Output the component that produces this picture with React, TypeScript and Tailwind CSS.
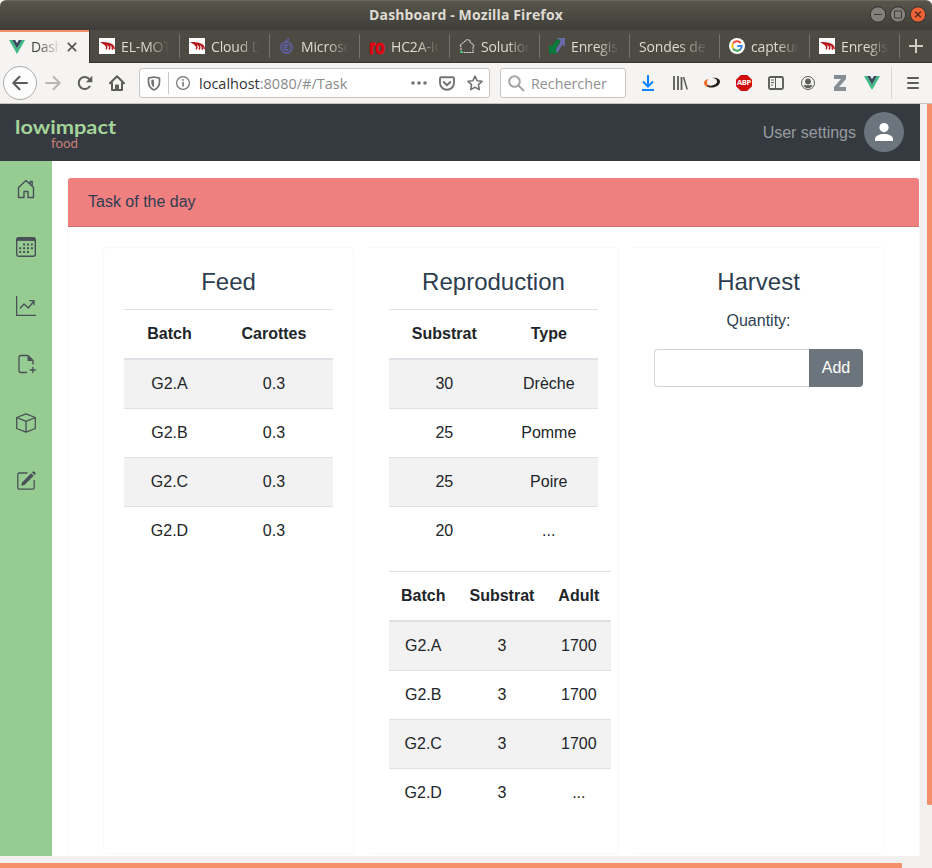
import React from 'react';

const CHROME = "font-['Open_Sans','Noto_Sans',sans-serif]";

function VueIcon() {
  return (
    <svg width="16" height="14" viewBox="0 0 16 14" className="shrink-0">
      <path d="M0 0h3.2L8 8.400 12.800 0H16L8 14z" fill="#41b883" />
      <path d="M3.200 0h3L8 3.200 9.800 0h3L8 8.400z" fill="#34495e" />
    </svg>
  );
}

function RsIcon() {
  return (
    <svg width="16" height="16" viewBox="0 0 16 16" className="shrink-0">
      <path d="M0 0h16v16H0z" fill="#fff" />
      <path d="M1 4C6 4 12 4.500 14.500 7.200 15.500 8.500 16 10 16 11.500L15 11C14.500 9 13 7.800 11.500 7.500L6 7.300C4.500 6.300 3 5.200 1 4z" fill="#b8161c" />
      <path d="M6 6.800C8 7.800 8.500 9.500 7 11.300M9 6.800C11 7.800 11.300 9.800 10 11.500M12 7C13.800 8.300 14 9.800 13.200 11.700" fill="none" stroke="#b8161c" strokeWidth="1.500" />
    </svg>
  );
}

function BerryIcon() {
  return (
    <svg width="16" height="16" viewBox="0 0 16 16" fill="none" stroke="#6464b8" className="shrink-0">
      <circle cx="7.500" cy="9.500" r="5.700" strokeWidth="1.200" />
      <circle cx="7.500" cy="9.500" r="3.600" strokeWidth=".7" />
      <path d="M6 7.500v4h3M6 7.500h3M6 9.500h2.500" strokeWidth="1" />
      <path d="M7 4C6.800 2.300 8 .8 9.800.5M7.500 3.500C9 3.500 9.800 2.200 9.800.5" strokeWidth="1" />
    </svg>
  );
}

function RoIcon() {
  return (
    <span className="flex h-4 w-4 shrink-0 items-center justify-center font-['Liberation_Sans',sans-serif] text-[18px] leading-4 font-bold text-[#e3000f]">
      <span className="inline-block translate-y-px scale-x-[.85] scale-y-110 [-webkit-text-stroke:.8px_#e3000f]">ro</span>
    </span>
  );
}

function OutlineHouseIcon() {
  return (
    <svg width="16" height="16" viewBox="0 0 16 16" fill="none" className="shrink-0">
      <path d="M2 14.500V8.500L.8 7.500 7.500 2 9 1.500 11 2.500v1.500l4 3.500-1 1v6z" stroke="#d4d4d0" strokeWidth="1.100" strokeDasharray="2 .6" />
      <path d="M1.200 14h2.300" stroke="#37c871" strokeWidth="1.800" />
    </svg>
  );
}

function ArrowsIcon() {
  return (
    <svg width="16" height="16" viewBox="0 0 16 16" className="shrink-0">
      <path d="M8 0h8v9l-2.500-2.500L8.500 15H5L11.500 4z" fill="#6a6aa8" />
      <path d="M0 6.500l2.500 2L8 1.500h3.500L6.500 12 9 15.500H0z" fill="#087a3c" />
    </svg>
  );
}

function GoogleIcon() {
  return (
    <svg width="16" height="16" viewBox="0 0 16 16" fill="none" strokeWidth="2" className="shrink-0">
      <circle cx="8" cy="8" r="8" fill="#fff" />
      <path d="M11.600 5A4.700 4.700 0 0 0 4 5.600" stroke="#ea4335" />
      <path d="M4 5.600a4.700 4.700 0 0 0 0 4.800" stroke="#fbbc05" />
      <path d="M4 10.400a4.700 4.700 0 0 0 7.200 1" stroke="#34a853" />
      <path d="M11.200 11.400A4.600 4.600 0 0 0 12.700 8H8.200" stroke="#4285f4" />
    </svg>
  );
}

const tabs: { label: string; icon: React.ReactNode }[] = [
  { label: 'EL-MOT', icon: <RsIcon /> },
  { label: 'Cloud D', icon: <RsIcon /> },
  { label: 'Microsof', icon: <BerryIcon /> },
  { label: 'HC2A-IC', icon: <RoIcon /> },
  { label: 'Solution', icon: <OutlineHouseIcon /> },
  { label: 'Enregist', icon: <ArrowsIcon /> },
  { label: 'Sondes de', icon: null },
  { label: 'capteur', icon: <GoogleIcon /> },
  { label: 'Enregist', icon: <RsIcon /> },
];

function TitleBar() {
  return (
    <div className="relative flex h-[30px] items-center justify-center rounded-t-[6px] border-t border-[#6b685c] bg-linear-to-b from-[#58564b] to-[#3e3d39]">
      <span className="pb-[2px] text-[14px] leading-none font-bold tracking-[0.13px] whitespace-nowrap text-[#dfdbd2]">Dashboard - Mozilla Firefox</span>
      <div className="absolute top-[5px] right-[6px] flex gap-1">
        <svg width="16" height="17" viewBox="0 0 16 17"><circle cx="8" cy="8.500" r="7.700" fill="#83817a" stroke="#33322e" /><path d="M4 8.500h8" stroke="#3c3b37" /></svg>
        <svg width="16" height="17" viewBox="0 0 16 17"><circle cx="8" cy="8.500" r="7.700" fill="#83817a" stroke="#33322e" /><path d="M4.500 5h7v7h-7z" fill="none" stroke="#3c3b37" /></svg>
        <svg width="16" height="17" viewBox="0 0 16 17"><circle cx="8" cy="8.500" r="7.700" fill="#ed6237" stroke="#33322e" /><path d="M5.200 5.700l5.600 5.600M10.800 5.700l-5.600 5.600" stroke="#4a2a1d" strokeWidth="1.300" /></svg>
      </div>
    </div>
  );
}

function TabStrip() {
  return (
    <div className="flex h-[33px] bg-[#4c4a43] text-[14px]">
      <div className="flex w-[89px] shrink-0 items-center border-t-2 border-[#f28d68] bg-[#f5f4f2] pb-[2px] pl-[9px]">
        <VueIcon />
        <span className="ml-[6px] w-[30px] overflow-hidden tracking-[-0.4px] text-[#3c3c3c] [mask-image:linear-gradient(90deg,#000_20%,transparent)]">Dash</span>
        <svg width="10" height="10" viewBox="0 0 10 10" className="ml-[6px]"><path d="M.8.8l8.400 8.400M9.200.8L.8 9.200" stroke="#555" strokeWidth="1.700" /></svg>
      </div>
      {tabs.map((tab, i) => (
        <div key={i} className={'flex shrink-0 items-center border-b border-[#34332f] ' + (i === 0 ? 'w-[91px] border-l' : 'w-[90px]')}>
          <div className="flex w-[89px] items-center gap-[6px] pl-[9px]">
            {tab.icon}
            <span className={(tab.icon ? 'w-[48px]' : 'w-[70px]') + ' overflow-hidden whitespace-nowrap tracking-[-0.15px] text-[#dfdbd2] [mask-image:linear-gradient(90deg,#000_55%,transparent)]'}>{tab.label}</span>
          </div>
          <div className="h-6 w-px shrink-0 bg-[#74726b]" />
        </div>
      ))}
      <div className="flex flex-1 items-center justify-center border-b border-[#34332f]">
        <svg width="14" height="14" viewBox="0 0 14 14"><path d="M7 0v14M0 7h14" stroke="#cfccc4" strokeWidth="2" /></svg>
      </div>
    </div>
  );
}

function Cell({ children }: { children: React.ReactNode }) {
  return <div className="flex w-8 shrink-0 items-center justify-center">{children}</div>;
}

const line = { fill: 'none', stroke: '#5c5c5b', strokeWidth: 2, strokeLinecap: 'round', strokeLinejoin: 'round' } as const;

function Toolbar() {
  return (
    <div className="flex h-[41px] items-center border-b border-[#c6c4c1] bg-[#f5f4f2]">
      <div className="ml-[3px] flex h-[34px] w-[34px] shrink-0 items-center justify-center rounded-full border border-[#adacaa] bg-[#fcfcfc]">
        <svg width="16" height="16" viewBox="0 0 16 16" {...line}><path d="M15 8H1.500M7.500 1.800L1.300 8l6.200 6.200" /></svg>
      </div>
      <Cell><svg width="16" height="16" viewBox="0 0 16 16" {...line} stroke="#b9b8b6"><path d="M1 8h13.500M8.500 1.800L14.700 8l-6.200 6.200" /></svg></Cell>
      <Cell>
        <svg width="16" height="16" viewBox="0 0 16 16">
          <path d="M12.600 11.500A6 6 0 1 1 12.600 4.500" fill="none" stroke="#5c5c5b" strokeWidth="2" strokeLinecap="round" />
          <path d="M15.300.8v6.500H8.800z" fill="#5c5c5b" />
        </svg>
      </Cell>
      <Cell>
        <svg width="16" height="16" viewBox="0 0 16 16" {...line}><path d="M1 8.300L8 1.200l7 7.100M3 8v7h10V8M7 15v-4.500h2V15" /></svg>
      </Cell>
      <div className="ml-[6px] flex h-[30px] w-[351px] shrink-0 items-center rounded-[3px] border border-[#c8c7c5] bg-white">
        <div className="flex w-7 justify-center">
          <svg width="14" height="15" viewBox="0 0 14 15"><path d="M1.500 2.200L7 1l5.500 1.200V6c0 4-2.200 6.500-5.500 8-3.300-1.500-5.500-4-5.500-8z" fill="none" stroke="#737373" strokeWidth="1.700" strokeLinejoin="round" /><path d="M7 3.400V11.500C5 10.200 4.300 8.500 4.300 6V4z" fill="#737373" /></svg>
        </div>
        <div className="h-[22px] w-px bg-[#c8c8c8]" />
        <svg width="14" height="14" viewBox="0 0 14 14" className="ml-[7px]"><circle cx="7" cy="7" r="6.400" fill="none" stroke="#737373" strokeWidth="1.200" /><path d="M7 6v4.500M7 3.200v1.500" stroke="#737373" strokeWidth="1.600" /></svg>
        <span className="ml-[9px] w-[214px] pt-[2px] text-[14.500px] whitespace-nowrap text-[#8b8b8b]"><span className="text-[#333]">localhost</span>:8080/#/Task</span>
        <svg width="16" height="4" viewBox="0 0 16 4" fill="#737373" className="-ml-[2px] shrink-0"><circle cx="2" cy="2" r="1.800" /><circle cx="8" cy="2" r="1.800" /><circle cx="14" cy="2" r="1.800" /></svg>
        <svg width="16" height="15" viewBox="0 0 16 15" {...line} stroke="#737373" className="ml-[12px] shrink-0"><path d="M2.200 1.200h11.600q1.200 0 1.200 1.200V6.800a7 7 0 0 1-14 0V2.400q0-1.200 1.200-1.200z" strokeWidth="1.900" /><path d="M4.700 6L8 9.200 11.300 6" /></svg>
        <svg width="16" height="16" viewBox="0 0 16 16" {...line} stroke="#737373" strokeWidth="1.600" className="ml-[12px] shrink-0"><path d="M8 1.200l2.100 4.500 4.900.6-3.600 3.400.9 4.900L8 12.200l-4.300 2.400.9-4.900L1 6.300l4.900-.6z" /></svg>
      </div>
      <div className="ml-[10px] flex h-[30px] w-[126px] shrink-0 items-center rounded-[3px] border border-[#c8c7c5] bg-white pl-[7px]">
        <svg width="17" height="17" viewBox="0 0 17 17" fill="none" stroke="#a5a5a5" strokeWidth="2"><circle cx="6.500" cy="6.500" r="5.300" /><path d="M10.500 10.500l5.500 5.500" /></svg>
        <span className="ml-[6px] pt-[2px] text-[14.300px] text-[#8f8f8f]">Rechercher</span>
      </div>
      <div className="ml-[6px] flex">
        <Cell><svg width="14" height="16" viewBox="0 0 14 16" fill="none" stroke="#0a84ff" strokeWidth="2"><path d="M7 0v11M2 6.500l5 5 5-5M1 15h12" /></svg></Cell>
        <Cell><svg width="16" height="14" viewBox="0 0 16 14" fill="none" stroke="#5c5c5b" strokeWidth="2"><path d="M2 0v14M6 0v14M9.500 1v13" strokeWidth="1.800" /><path d="M11.500 1l3.700 12.500" strokeWidth="1.500" /></svg></Cell>
        <Cell>
          <svg width="16" height="12" viewBox="0 0 16 12">
            <path d="M8 .8C11.500.3 16 1.200 16 4.500 16 8.500 11 11 5.500 10.500L3 9.500C8 9.800 13 7.500 13 4.500 13 2.500 11 1.400 8 .8z" fill="#202020" />
            <path d="M4.500 1.800C2 2.500 0 4 0 6 0 8 1.500 9.500 4 10.200L6 9C4 8.500 3 7.300 3 5.600 3 4 3.500 2.800 4.500 1.800z" fill="#eb6b2d" />
            <path d="M3 9C5 10.500 9 10.500 12 8.500L11 7.500C8.500 8.800 5.500 9 4 8z" fill="#302722" />
          </svg>
        </Cell>
        <Cell>
          <div className="flex h-4 w-4 items-center justify-center bg-[#d00c0c] text-[7.500px] leading-none font-bold tracking-[-0.3px] text-white [clip-path:polygon(30%_0,70%_0,100%_30%,100%_70%,70%_100%,30%_100%,0_70%,0_30%)]">ABP</div>
        </Cell>
        <Cell><svg width="16" height="14" viewBox="0 0 16 14" fill="none" stroke="#5c5c5b"><rect x="1" y="1" width="14" height="12" rx="1.500" strokeWidth="1.900" /><path d="M7.500 1v12M3 4h3M3 6.500h3M3 9h2" /></svg></Cell>
        <Cell><svg width="14" height="14" viewBox="0 0 14 14"><circle cx="7" cy="7" r="6.500" fill="none" stroke="#5c5c5b" /><circle cx="7" cy="5.500" r="2.900" fill="#5c5c5b" /><path d="M2.500 9.300C4 8.500 5 9.300 7 9.300s3-.8 4.500 0C10.600 11.200 9 12.200 7 12.200s-3.600-1-4.500-2.900z" fill="#5c5c5b" /></svg></Cell>
        <Cell><svg width="12" height="16" viewBox="0 0 12 16"><path d="M0 0h12v4L5 12h7v4H0v-4l7-8H0z" fill="#858d95" /></svg></Cell>
        <Cell><VueIcon /></Cell>
      </div>
      <div className="ml-[3px] h-8 w-px bg-[#d8d6d4]" />
      <svg width="12" height="12" viewBox="0 0 12 12" className="ml-[15px]" stroke="#5c5c5b" strokeWidth="2" strokeLinecap="round"><path d="M1 1h10M1 6h10M1 11h10" /></svg>
    </div>
  );
}

const navIcons: React.ReactNode[] = [
  <g><path d="M2 9L10 1.500 18 9M2.500 8.500v10H8v-6h4v6h5.500v-10M14.200 5V2.500h2v4.500" strokeWidth="1.400" /></g>,
  <g><rect x=".7" y=".7" width="18.600" height="18.600" rx="2" strokeWidth="1.400" /><path d="M1 2.300h18" strokeWidth="3.200" /><path d="M7 7.500h11M3.200 11.300h14.500M3.200 15h10.500" strokeWidth="2" strokeDasharray="2 1.900" /></g>,
  <g><path d="M.6 0v19.400H20M4 12.500l4-4.500 4.300 4 5.700-7M13.300 4.600H18v4.700" strokeWidth="1.300" /></g>,
  <g><path d="M12 1.500H5Q3 1.500 3 3.500v13q0 2 2 2h6M12 1.500l5 5v4M16.800 13v6M13.800 16h6" strokeWidth="1.300" /><path d="M11.500 1.500V7h6z" fill="#495057" stroke="none" /></g>,
  <g><path d="M10 .8L19.300 4.500v11L10 19.200.7 15.500v-11zM.7 4.500L10 8.300l9.300-3.800M10 8.300v11" strokeWidth="1.300" /></g>,
  <g><path d="M11.500 2H3.200Q1.800 2 1.800 3.400v13.400q0 1.400 1.400 1.400h13.600q1.400 0 1.400-1.400V9" strokeWidth="1.300" /><path d="M6 11.500L15.200 2.300l2.500 2.500L8.500 14 5.300 14.800zM16 1.500l1-1q.6-.5 1.200 0l1.300 1.300q.5.600 0 1.200l-1 1z" fill="#495057" stroke="none" /></g>,
];

function DataTable({ head, rows }: { head: string[]; rows: string[][] }) {
  return (
    <table className="mb-4 w-full border-collapse text-center text-[#212529]">
      <thead>
        <tr>{head.map((h) => <th key={h} className="border-t border-b-2 border-[#dee2e6] p-3 font-bold">{h}</th>)}</tr>
      </thead>
      <tbody>
        {rows.map((row, r) => (
          <tr key={r} className="odd:bg-[#f2f2f2]">
            {row.map((c, i) => <td key={i} className="border-t border-[#dee2e6] p-3">{c}</td>)}
          </tr>
        ))}
      </tbody>
    </table>
  );
}

function Panel({ title, children }: { title: string; children: React.ReactNode }) {
  return (
    <div className="h-[607px] w-[251px] shrink-0 rounded border border-[#f8f9fa] p-5 text-center not-first:rounded-l-none not-first:border-l-transparent">
      <h4 className="mb-3 text-2xl leading-[28.8px]">{title}</h4>
      {children}
    </div>
  );
}

const batches = ['G2.A', 'G2.B', 'G2.C', 'G2.D'];

export default function App() {
  return (
    <div className={'flex h-[868px] w-[932px] flex-col overflow-hidden bg-white ' + CHROME}>
      <TitleBar />
      <TabStrip />
      <Toolbar />
      <div className="flex h-[752px] font-['Liberation_Sans',Arial,sans-serif] text-base text-[#2c3e50]">
        <div className="flex w-[920px] flex-col overflow-hidden">
          <header className="flex h-[57px] shrink-0 items-center justify-between bg-[#343a40] pr-4 pl-[15px]">
            <svg width="104" height="36" viewBox="0 0 104 36" className="font-['Lato',sans-serif]">
              <text x="0" y="18.500" fontSize="19" fontWeight="700" fill="#a5d499" textLength="101" lengthAdjust="spacingAndGlyphs">lowimpact</text>
              <text x="36" y="33" fontSize="12.500" fill="#c97f7c" textLength="27" lengthAdjust="spacingAndGlyphs">food</text>
            </svg>
            <div className="flex items-center gap-2 pb-px text-[#999c9f]">
              <span className="pt-px">User settings</span>
              <span className="flex h-10 w-10 items-center justify-center rounded-full bg-[#6c757d]">
                <svg width="18" height="18" viewBox="0 0 18 18" fill="#fff"><circle cx="9" cy="4.600" r="4.600" /><path d="M0 18v-2c0-3 4-5 9-5s9 2 9 5v2z" /></svg>
              </span>
            </div>
          </header>
          <div className="flex flex-1 overflow-hidden">
            <nav className="flex w-[52px] shrink-0 flex-col items-center gap-[38.400px] bg-[#96cc92] pt-[18px]">
              {navIcons.map((icon, i) => (
                <svg key={i} width="20" height="20" viewBox="0 0 20 20" fill="none" stroke="#495057" strokeLinejoin="round" className="shrink-0">{icon}</svg>
              ))}
            </nav>
            <main className="mt-4 ml-[15px] h-[720px] w-[853px] shrink-0 rounded border border-[#f8f9fa]">
              <div className="flex h-[49px] items-center rounded-t-[3px] border-b border-[#d27070] bg-[#f08080] px-5">Task of the day</div>
              <div className="flex gap-[14px] px-[35px] pt-5">
                <Panel title="Feed">
                  <DataTable head={['Batch', 'Carottes']} rows={batches.map((b) => [b, '0.3'])} />
                </Panel>
                <Panel title="Reproduction">
                  <DataTable head={['Substrat', 'Type']} rows={[['30', 'Drèche'], ['25', 'Pomme'], ['25', 'Poire'], ['20', '...']]} />
                  <DataTable head={['Batch', 'Substrat', 'Adult']} rows={batches.map((b, i) => [b, '3', i < 3 ? '1700' : '...'])} />
                </Panel>
                <Panel title="Harvest">
                  <p className="mb-4">Quantity:</p>
                  <div className="flex h-[38px]">
                    <input className="min-w-0 flex-1 rounded-l border border-r-0 border-[#ced4da] bg-white" />
                    <button className="w-[54px] rounded-r bg-[#6c757d] text-white">Add</button>
                  </div>
                </Panel>
              </div>
            </main>
          </div>
        </div>
        <div className="flex w-3 justify-end bg-[#f1f0ef]"><div className="h-[701px] w-[5px] rounded-b-[1px] bg-[#f39069]" /></div>
      </div>
      <div className="flex h-3 items-end bg-[#f1f0ef]"><div className="h-[5px] w-[902px] rounded-r-[1px] bg-[#f39069]" /></div>
    </div>
  );
}
